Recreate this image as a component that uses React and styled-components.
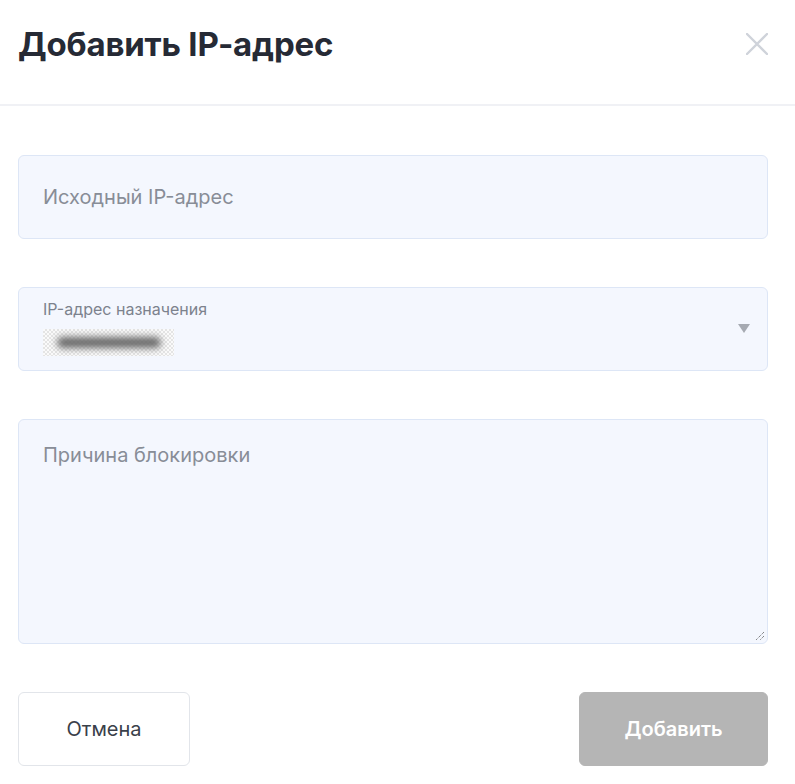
import React from "react";
import styled, { createGlobalStyle } from "styled-components";

const Global = createGlobalStyle`
  body {
    margin: 0;
    background: #ffffff;
    font-family: Inter, "Noto Sans", sans-serif;
  }
  * { box-sizing: border-box; }
`;

const Modal = styled.div`
  width: 795px;
  height: 784px;
  background: #fff;
  overflow: hidden;
`;

const Header = styled.div`
  height: 106px;
  display: flex;
  align-items: center;
  justify-content: space-between;
  padding: 0 26px 16px 18px;
  border-bottom: 2px solid #f0f1f5;
`;

const Title = styled.h1`
  margin: 0;
  font-size: 33px;
  font-weight: 700;
  color: #262a35;
  letter-spacing: -0.2px;
`;

const Close = styled.button`
  border: none;
  background: none;
  padding: 0;
  width: 24px;
  height: 24px;
  display: flex;
  align-items: center;
  justify-content: center;
  cursor: pointer;
`;

const Body = styled.div`
  display: flex;
  flex-direction: column;
  gap: 48px;
  padding: 49px 27px 0 18px;
`;

const Field = styled.div`
  position: relative;
  height: ${(p) => p.h}px;
  background: #f4f7fe;
  border: 1px solid #dde6f6;
  border-radius: 6px;
  padding: ${(p) => p.pad};
  font-size: 20px;
  color: #888d97;
`;

const Label = styled.div`
  font-size: 16px;
  color: #7c828d;
  margin-bottom: 10px;
`;

const Masked = styled.div`
  width: 131px;
  height: 27px;
  background-color: #fafafa;
  background-image: linear-gradient(45deg, #e4e4e4 25%, transparent 25%, transparent 75%, #e4e4e4 75%),
    linear-gradient(45deg, #e4e4e4 25%, transparent 25%, transparent 75%, #e4e4e4 75%);
  background-size: 4px 4px;
  background-position: 0 0, 2px 2px;
  display: flex;
  align-items: center;
  justify-content: center;
  overflow: hidden;
`;

const Blur = styled.div`
  width: 104px;
  height: 11px;
  border-radius: 6px;
  background: #6a6a6a;
  filter: blur(3.5px);
`;

const Arrow = styled.div`
  position: absolute;
  right: 17px;
  top: 36px;
  width: 0;
  height: 0;
  border-left: 6px solid transparent;
  border-right: 6px solid transparent;
  border-top: 9px solid #a6aab2;
`;

const Grip = styled.svg`
  position: absolute;
  right: 2px;
  bottom: 2px;
`;

const Footer = styled.div`
  display: flex;
  justify-content: space-between;
`;

const Button = styled.button`
  height: 74px;
  width: ${(p) => p.w}px;
  border-radius: 6px;
  font-family: Inter, "Noto Sans", sans-serif;
  font-size: 20px;
  cursor: pointer;
  border: 1px solid ${(p) => (p.primary ? "#b5b5b5" : "#e2e5ea")};
  background: ${(p) => (p.primary ? "#b5b5b5" : "#fff")};
  color: ${(p) => (p.primary ? "#fff" : "#3a3f4a")};
  font-weight: ${(p) => (p.primary ? 600 : 400)};
`;

export default function App() {
  return (
    <Modal>
      <Global />
      <Header>
        <Title>Добавить IP-адрес</Title>
        <Close aria-label="close">
          <svg width="22" height="22" viewBox="0 0 22 22">
            <path d="M1 1L21 21M21 1L1 21" stroke="#cfd3da" strokeWidth="2.4" strokeLinecap="round" />
          </svg>
        </Close>
      </Header>
      <Body>
        <Field h={84} pad="29px 24px">Исходный IP-адрес</Field>
        <Field h={84} pad="11px 24px">
          <Label>IP-адрес назначения</Label>
          <Masked>
            <Blur />
          </Masked>
          <Arrow />
        </Field>
        <Field h={225} pad="23px 24px">
          Причина блокировки
          <Grip width="10" height="10" viewBox="0 0 10 10">
            <path d="M9 1L1 9M9 5L5 9" stroke="#555" strokeWidth="1" strokeDasharray="1 1" />
          </Grip>
        </Field>
        <Footer>
          <Button w={172}>Отмена</Button>
          <Button w={189} primary>Добавить</Button>
        </Footer>
      </Body>
    </Modal>
  );
}
